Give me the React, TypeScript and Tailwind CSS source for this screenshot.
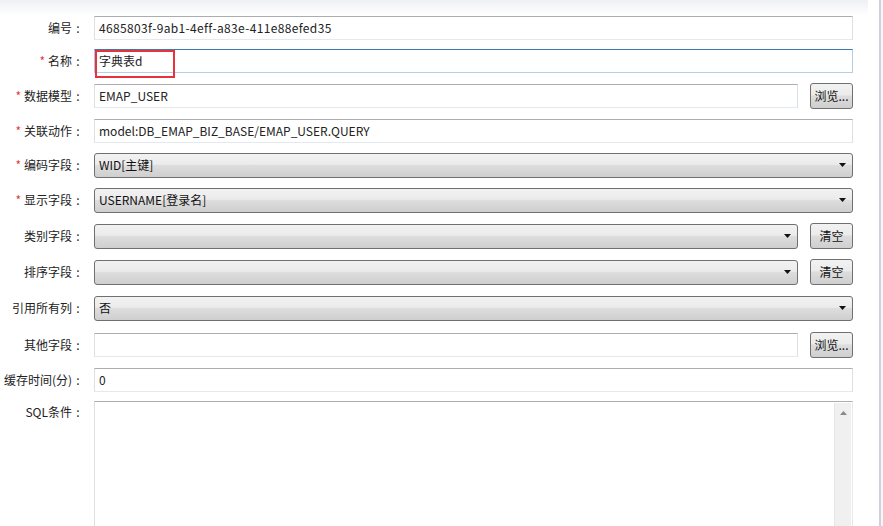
const font = { fontFamily: '"Noto Sans CJK SC", "Noto Sans", sans-serif' }

type Row = {
  label: string
  required?: boolean
  kind: 'input' | 'select' | 'textarea'
  value?: string
  button?: string
  focused?: boolean
  mt: string
  extra?: string
}

const rows: Row[] = [
  { label: '编号', kind: 'input', value: '4685803f-9ab1-4eff-a83e-411e88efed35', mt: 'mt-[16px]', extra: 'tracking-[0.35px]' },
  { label: '名称', required: true, kind: 'input', value: '字典表d', focused: true, mt: 'mt-[9px]' },
  { label: '数据模型', required: true, kind: 'input', value: 'EMAP_USER', button: '浏览...', mt: 'mt-[11px]' },
  { label: '关联动作', required: true, kind: 'input', value: 'model:DB_EMAP_BIZ_BASE/EMAP_USER.QUERY', mt: 'mt-[11px]' },
  { label: '编码字段', required: true, kind: 'select', value: 'WID[主键]', mt: 'mt-[10px]' },
  { label: '显示字段', required: true, kind: 'select', value: 'USERNAME[登录名]', mt: 'mt-[11px]' },
  { label: '类别字段', kind: 'select', value: '', button: '清空', mt: 'mt-[12px]' },
  { label: '排序字段', kind: 'select', value: '', button: '清空', mt: 'mt-[12px]' },
  { label: '引用所有列', kind: 'select', value: '否', mt: 'mt-[12px]' },
  { label: '其他字段', kind: 'input', value: '', button: '浏览...', mt: 'mt-[13px]' },
  { label: '缓存时间(分)', kind: 'input', value: '0', mt: 'mt-[11px]' },
  { label: 'SQL条件', kind: 'textarea', mt: 'mt-[9px]' },
]

const Label = ({ row }: { row: Row }) => (
  <div
    className={
      'w-[84px] shrink-0 text-right text-[12px] text-[#222] whitespace-nowrap ' +
      (row.kind === 'textarea' ? 'self-start pt-[2px]' : '')
    }
  >
    {row.required && <span className="text-[#e4393c] mr-[3px]">*</span>}
    {row.label}
    <span className="inline-block w-[12px] text-center">:</span>
  </div>
)

const WinButton = ({ text }: { text: string }) => (
  <div className="w-[43px] h-[26px] ml-[12px] shrink-0 flex items-center justify-center rounded-[3px] border border-[#707070] bg-[linear-gradient(to_bottom,#f2f2f2_0%,#ebebeb_45%,#dddddd_50%,#cfcfcf_100%)] text-[12px] text-[#111]">
    {text}
  </div>
)

const TextInput = ({ row }: { row: Row }) => (
  <div
    className={
      'relative flex-1 h-[24px] flex items-center px-[4px] text-[12px] text-[#222] border ' +
      (row.extra ?? '') +
      ' ' +
      (row.focused
        ? 'border-[#b5cfe7] border-t-[#3d7bad] border-l-[#a4c9e3]'
        : 'border-[#e3e9ef] border-t-[#abadb3] border-l-[#dbdfe6] border-r-[#dbdfe6]')
    }
  >
    {row.value}
    {row.focused && (
      <div className="absolute left-[0px] top-[0px] w-[80px] h-[28px] border-2 border-[#e8333a]" />
    )}
  </div>
)

const Select = ({ row }: { row: Row }) => (
  <div className="flex-1 h-[25px] flex items-center pl-[4px] pr-[6px] rounded-[3px] border border-[#707070] bg-[linear-gradient(to_bottom,#f2f2f2_0%,#ebebeb_45%,#dddddd_50%,#cfcfcf_100%)] text-[12px] text-[#111]">
    <span className="flex-1">{row.value}</span>
    <svg width="7" height="4" viewBox="0 0 7 4">
      <path d="M0 0h7L3.5 4z" fill="#111" />
    </svg>
  </div>
)

const TextArea = () => (
  <div className="flex-1 h-[140px] flex justify-end border border-[#e3e9ef] border-t-[#abadb3] border-l-[#dbdfe6] pt-[1px] pr-[1px]">
    <div className="w-[17px] bg-[#f0f0f0] border-l border-[#e6e6e6] flex justify-center pt-[8px]">
      <svg width="7" height="4" viewBox="0 0 7 4">
        <path d="M0 4h7L3.5 0z" fill="#8a8a8a" />
      </svg>
    </div>
  </div>
)

const FormRow = ({ row }: { row: Row }) => (
  <div
    className={
      'flex pr-[15px] shrink-0 ' +
      (row.kind === 'textarea' ? 'items-start ' : 'items-center h-[24px] ') +
      row.mt
    }
  >
    <Label row={row} />
    <div className="w-[10px] shrink-0" />
    {row.kind === 'input' && <TextInput row={row} />}
    {row.kind === 'select' && <Select row={row} />}
    {row.kind === 'textarea' && <TextArea />}
    {row.button && <WinButton text={row.button} />}
  </div>
)

export default function App() {
  return (
    <div className="w-[883px] h-[526px] overflow-hidden bg-white flex" style={font}>
      <div className="w-[868px] shrink-0 flex flex-col bg-[linear-gradient(to_bottom,#eef0f5_0px,#ffffff_15px)]">
        {rows.map((r) => (
          <FormRow key={r.label} row={r} />
        ))}
      </div>
      <div className="w-[11px] shrink-0" />
      <div className="w-[2px] shrink-0 bg-[#cfd0dc]" />
      <div className="flex-1 bg-[#f7f7fa]" />
    </div>
  )
}
